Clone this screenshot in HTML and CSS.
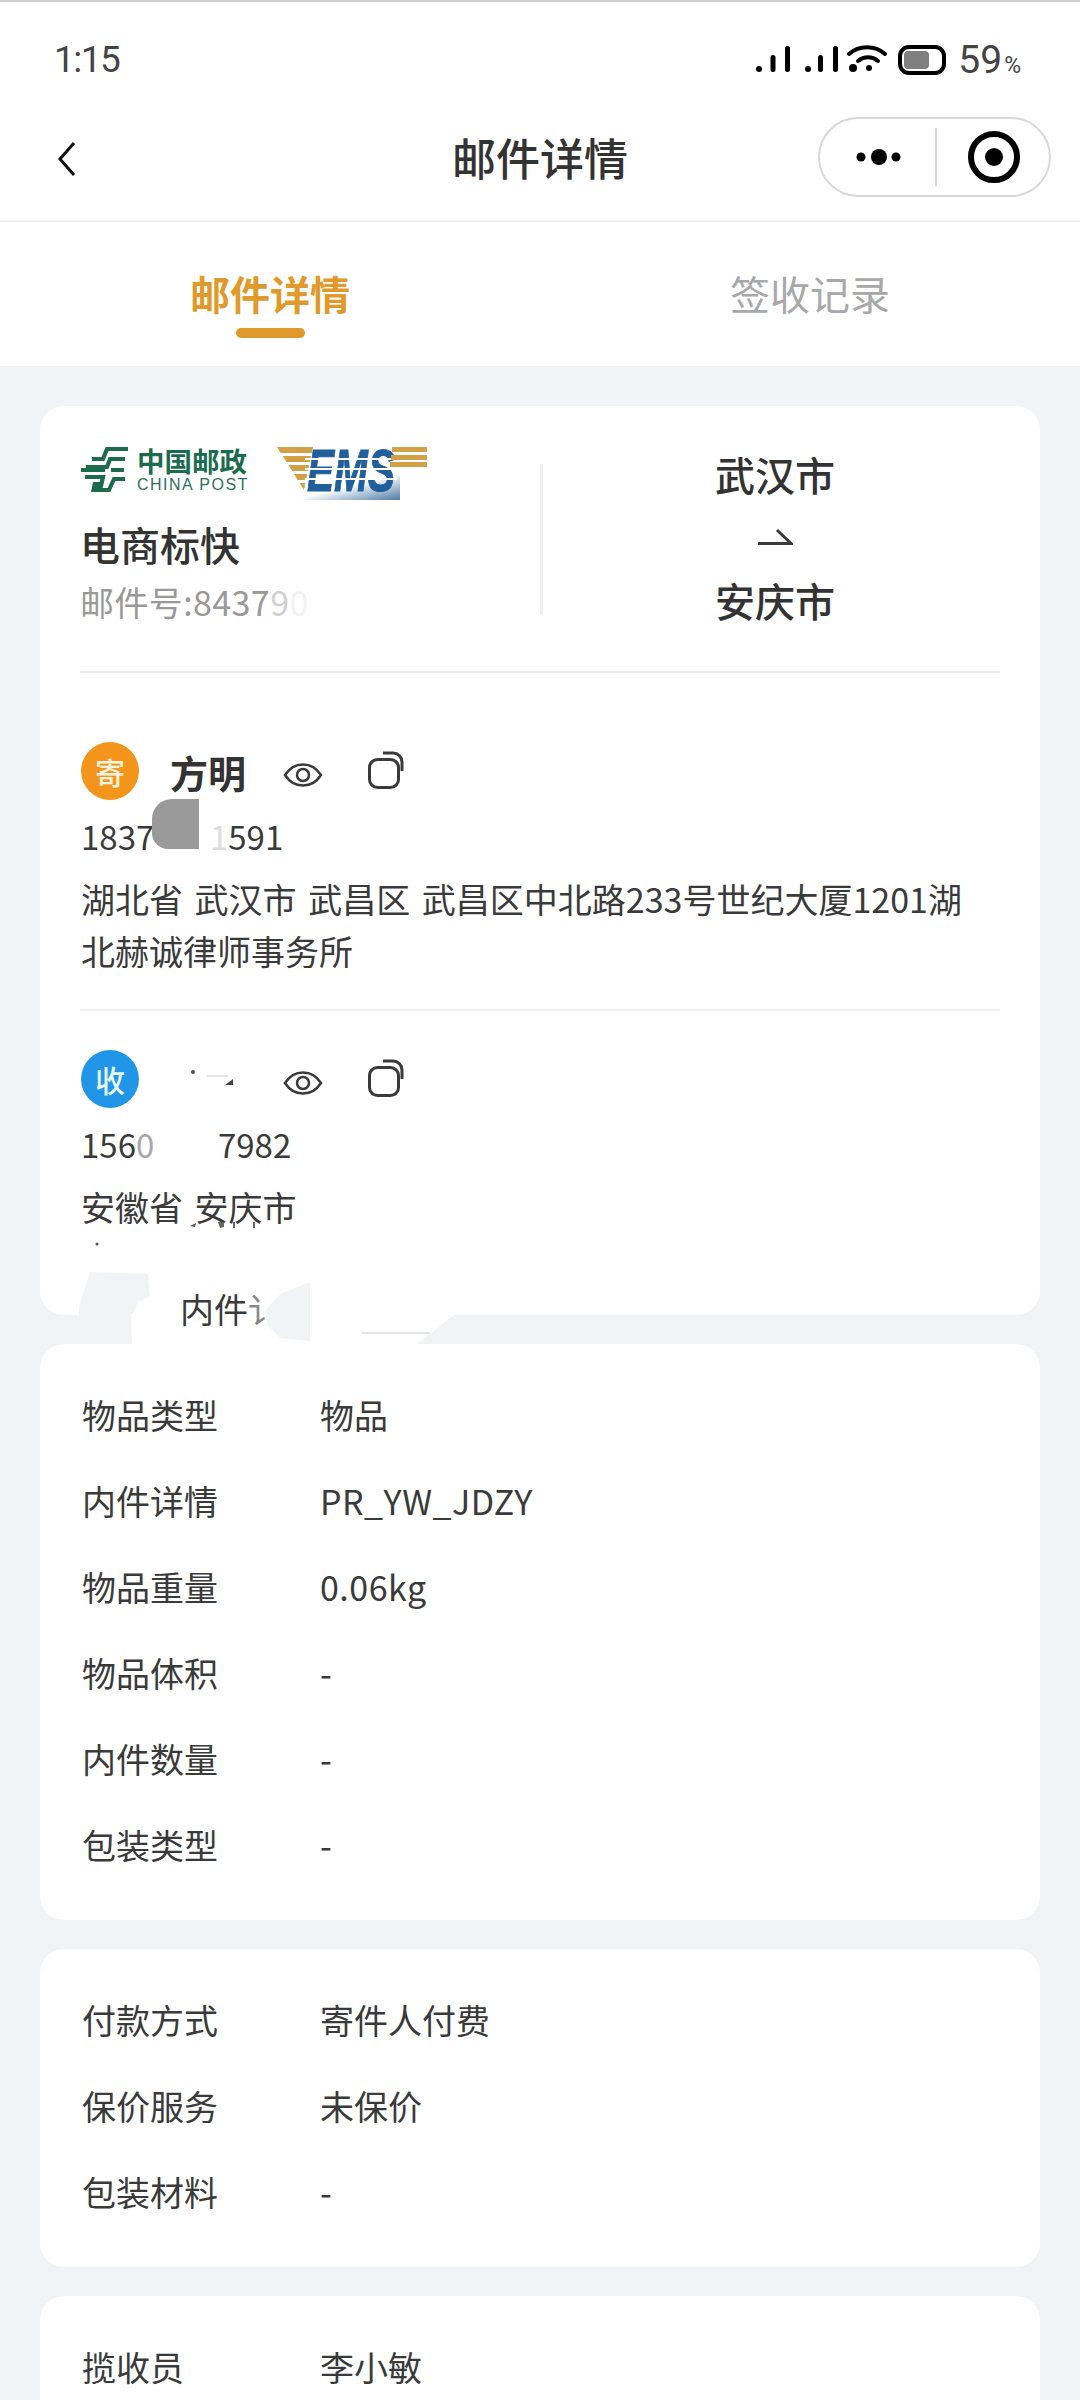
FILE: index.html

```html
<!DOCTYPE html>
<html lang="zh-CN">
<head>
    <meta charset="UTF-8">
    <meta name="viewport" content="width=device-width, initial-scale=1.0">
    <title>邮件详情</title>
    <link rel="stylesheet" href="styles.css">
</head>
<body>
    <div class="page">
        <div class="status-bar">
            <span class="time">1:15</span>
            <div class="status-right">
                <svg class="status-icons" width="135" height="32" viewBox="0 0 135 32">
                    <g fill="#000">
                        <circle cx="6" cy="25" r="3"/>
                        <rect x="17.500" y="11" width="5" height="17" rx="2.500"/>
                        <rect x="32" y="2" width="5" height="26" rx="2.500"/>
                        <circle cx="55" cy="25" r="3"/>
                        <rect x="65" y="11" width="5" height="17" rx="2.500"/>
                        <rect x="80" y="2" width="5" height="26" rx="2.500"/>
                        <circle cx="100" cy="24" r="4"/>
                        <circle cx="116" cy="24" r="3"/>
                    </g>
                    <g fill="none" stroke="#000" stroke-width="4" stroke-linecap="round">
                        <path d="M96 10 C106 1 122 1 132 10"/>
                        <path d="M105 17 C111 12 119 12 125 17"/>
                    </g>
                </svg>
                <div class="battery"><div class="battery-fill"></div></div>
                <span class="percent">59<small>%</small></span>
            </div>
        </div>

        <div class="nav-bar">
            <svg class="back" width="20" height="36" viewBox="0 0 20 36">
                <path d="M17 2 L3 18 L17 34" fill="none" stroke="#111" stroke-width="3"/>
            </svg>
            <div class="nav-title">邮件详情</div>
            <div class="capsule">
                <svg width="60" height="20" viewBox="0 0 60 20">
                    <circle cx="12" cy="10" r="4.500"/>
                    <circle cx="30" cy="10" r="8"/>
                    <circle cx="47" cy="10" r="4.500"/>
                </svg>
                <div class="capsule-line"></div>
                <svg width="60" height="60" viewBox="0 0 60 60">
                    <circle cx="30" cy="30" r="23" fill="none" stroke="#000" stroke-width="6"/>
                    <circle cx="30" cy="30" r="9"/>
                </svg>
            </div>
        </div>

        <div class="tabs">
            <div class="tab active">
                <div class="tab-text">邮件详情</div>
                <div class="tab-line"></div>
            </div>
            <div class="tab">
                <div class="tab-text">签收记录</div>
            </div>
        </div>

        <div class="content">
            <div class="card main-card">
                <div class="mail-head">
                    <div class="mail-left">
                        <div class="logos">
                            <svg class="post-mark" width="48" height="47" viewBox="0 0 48 47">
                                <g fill="none" stroke="#1b6b4e" stroke-width="4.200">
                                    <path d="M47 3 H26 L22 13 H11"/>
                                    <path d="M44 13 H29 L26 21 H5"/>
                                    <path d="M0 24 H24 M30 24 H43"/>
                                    <path d="M4 31 H22 L19 44 H28 L33 33 H44"/>
                                </g>
                                <path d="M12 36 H21 L18 46 H10 Z" fill="#1b6b4e"/>
                            </svg>
                            <div class="post-name">
                                <div class="post-cn">中国邮政</div>
                                <div class="post-en">CHINA POST</div>
                            </div>
                            <svg class="ems-logo" width="152" height="54" viewBox="0 0 152 54">
                                <defs>
                                    <linearGradient id="emsFade" x1="0.100" y1="0.100" x2="0.900" y2="1">
                                        <stop offset="0.450" stop-color="#fff"/>
                                        <stop offset="1" stop-color="#5d86ad"/>
                                    </linearGradient>
                                </defs>
                                <rect x="26" y="26" width="97" height="28" fill="url(#emsFade)"/>
                                <path d="M0 1 H36 L27 44 Z" fill="#d2a045"/>
                                <g fill="#fff">
                                    <rect x="0" y="7" width="40" height="3"/>
                                    <rect x="0" y="16" width="40" height="3"/>
                                    <rect x="0" y="25" width="40" height="3"/>
                                    <rect x="0" y="34" width="40" height="3"/>
                                </g>
                                <text class="ems-text" x="30" y="45" textLength="88" lengthAdjust="spacingAndGlyphs">EMS</text>
                                <g fill="#fff">
                                    <rect x="28" y="12" width="92" height="2"/>
                                    <rect x="28" y="22" width="92" height="2"/>
                                    <rect x="28" y="32" width="92" height="2"/>
                                </g>
                                <g fill="#d2a045">
                                    <rect x="115" y="1" width="35" height="5"/>
                                    <rect x="114" y="9" width="36" height="5"/>
                                    <rect x="113" y="16" width="37" height="5"/>
                                </g>
                            </svg>
                        </div>
                        <div class="mail-type">电商标快</div>
                        <div class="mail-no">邮件号:8437<span class="fade-a">9</span><span class="fade-b">0</span></div>
                    </div>
                    <div class="mail-split"></div>
                    <div class="mail-route">
                        <div class="city">武汉市</div>
                        <svg class="route-arrow" width="36" height="17" viewBox="0 0 36 17">
                            <path d="M1 15.500 H34 L20 2" fill="none" stroke="#3a3a3a" stroke-width="3"/>
                        </svg>
                        <div class="city">安庆市</div>
                    </div>
                </div>

                <div class="person sender">
                    <div class="person-top">
                        <div class="badge orange">寄</div>
                        <div class="person-name">方明</div>
                        <svg class="eye" width="40" height="26" viewBox="0 0 40 26">
                            <path d="M2 13 C11 -1 29 -1 38 13 C29 27 11 27 2 13 Z" fill="none" stroke="#3a3a3a" stroke-width="2.500"/>
                            <circle cx="20" cy="13" r="6" fill="none" stroke="#3a3a3a" stroke-width="2.500"/>
                        </svg>
                        <svg class="copy" width="36" height="38" viewBox="0 0 36 38">
                            <rect x="1.500" y="8.500" width="29" height="28" rx="8" fill="none" stroke="#3a3a3a" stroke-width="3"/>
                            <path d="M15 2 H25 a9 9 0 0 1 9 9 V20" fill="none" stroke="#3a3a3a" stroke-width="3"/>
                        </svg>
                    </div>
                    <div class="phone">1837<span class="phone-gap-a">1</span>591<div class="blot"></div></div>
                    <div class="address">湖北省 武汉市 武昌区 武昌区中北路233号世纪大厦1201湖北赫诚律师事务所</div>
                </div>

                <div class="person receiver">
                    <div class="person-top">
                        <div class="badge blue">收</div>
                        <svg class="person-name" width="76" height="40" viewBox="0 0 76 40">
                            <circle cx="23" cy="13" r="2" fill="#555"/>
                            <path d="M37 17 H58" stroke="#ddd" stroke-width="1.500"/>
                            <path d="M55 26 L63 20 V26 Z" fill="#444"/>
                        </svg>
                        <svg class="eye" width="40" height="26" viewBox="0 0 40 26">
                            <path d="M2 13 C11 -1 29 -1 38 13 C29 27 11 27 2 13 Z" fill="none" stroke="#3a3a3a" stroke-width="2.500"/>
                            <circle cx="20" cy="13" r="6" fill="none" stroke="#3a3a3a" stroke-width="2.500"/>
                        </svg>
                        <svg class="copy" width="36" height="38" viewBox="0 0 36 38">
                            <rect x="1.500" y="8.500" width="29" height="28" rx="8" fill="none" stroke="#3a3a3a" stroke-width="3"/>
                            <path d="M15 2 H25 a9 9 0 0 1 9 9 V20" fill="none" stroke="#3a3a3a" stroke-width="3"/>
                        </svg>
                    </div>
                    <div class="phone">156<span class="phone-gap-b">0</span>7982</div>
                    <div class="address">安徽省 安庆市</div>
                </div>

                <svg class="specks" width="300" height="40" viewBox="0 0 300 40">
                    <circle cx="57" cy="28" r="1.500" fill="#555"/>
                    <path d="M150 10 L156 7 L155 11 Z" fill="#555"/>
                    <path d="M178 6 L184 6 V11 L180 12 Z" fill="#666"/>
                    <path d="M194 6 V12 M214 6 V12" stroke="#666" stroke-width="2"/>
                </svg>

                <div class="torn-edge">
                    <svg width="500" height="80" viewBox="0 0 500 80">
                        <path d="M39 49 V41 L50 6 L108 8 L110 30 L98 36 L92 49 Z" fill="#f2f3f5"/>
                        <path d="M91 48 H415 L390 68 L377 78 H92 Z" fill="#fff"/>
                        <path d="M225 45 L240 28 L270 16 V75 L240 72 L228 60 Z" fill="#f2f3f5"/>
                        <path d="M322 67 H390" stroke="#e6e6e6" stroke-width="2"/>
                    </svg>
                    <span class="torn-text">内件<span class="torn-frag">讠</span></span>
                </div>
            </div>

            <div class="card info-card">
                <div class="row"><span class="row-label">物品类型</span><span>物品</span></div>
                <div class="row"><span class="row-label">内件详情</span><span class="latin">PR_YW_JDZY</span></div>
                <div class="row"><span class="row-label">物品重量</span><span class="latin">0.06kg</span></div>
                <div class="row"><span class="row-label">物品体积</span><span>-</span></div>
                <div class="row"><span class="row-label">内件数量</span><span>-</span></div>
                <div class="row"><span class="row-label">包装类型</span><span>-</span></div>
            </div>

            <div class="card info-card">
                <div class="row"><span class="row-label">付款方式</span><span>寄件人付费</span></div>
                <div class="row"><span class="row-label">保价服务</span><span>未保价</span></div>
                <div class="row"><span class="row-label">包装材料</span><span>-</span></div>
            </div>

            <div class="card info-card">
                <div class="row"><span class="row-label">揽收员</span><span>李小敏</span></div>
            </div>
        </div>
    </div>
</body>
</html>
```

FILE: styles.css

```css
* {
    box-sizing: border-box;
}
html, body {
    margin: 0;
    padding: 0;
    height: 2400px;
    overflow: hidden;
}
body {
    font-family: "Noto Sans CJK SC", "Noto Sans", sans-serif;
    color: #3a3a3a;
    background-color: #f2f3f5;
}
.page {
    height: 2400px;
    overflow: hidden;
    background-color: #f2f3f5;
    border-top: 2px solid #cfcfcf;
}

/* status bar */
.status-bar {
    height: 92px;
    padding: 24px 59px 0 54px;
    display: flex;
    justify-content: space-between;
    align-items: flex-start;
    background: #fff;
}
.time {
    font-family: Roboto, sans-serif;
    font-size: 37px;
    line-height: 68px;
    letter-spacing: -1.500px;
    color: #444;
    height: 68px;
}
.status-right {
    display: flex;
    align-items: center;
    height: 68px;
}
.status-icons {
    margin-right: 10px;
}
.battery {
    width: 48px;
    height: 30px;
    border: 4px solid #000;
    border-radius: 11px;
    padding: 2px;
    margin-right: 12px;
}
.battery-fill {
    width: 25px;
    height: 18px;
    background: #808080;
    border-radius: 4px;
}
.percent {
    font-family: Roboto, sans-serif;
    font-size: 39px;
    color: #444;
}
.percent small {
    font-size: 23px;
    margin-left: 2px;
}

/* nav */
.nav-bar {
    height: 128px;
    position: relative;
    display: flex;
    align-items: center;
    padding: 0 29px 0 57px;
    justify-content: space-between;
    background: #fff;
    border-bottom: 2px solid #f0f0f0;
}
.back {
    margin-top: 4px;
}
.nav-title {
    position: absolute;
    left: 0;
    right: 0;
    text-align: center;
    font-size: 44px;
    font-weight: 500;
    color: #333;
    pointer-events: none;
}
.capsule {
    width: 233px;
    height: 80px;
    border: 2px solid #d8d8d8;
    border-radius: 40px;
    display: flex;
    align-items: center;
    padding-left: 29px;
}
.capsule-line {
    width: 2px;
    height: 58px;
    background: #d8d8d8;
    margin: 0 27px 0 26px;
}

/* tabs */
.tabs {
    height: 144px;
    display: flex;
    background: #fff;
}
.tab {
    width: 540px;
    padding-top: 43px;
    display: flex;
    flex-direction: column;
    align-items: center;
    color: #a8a8a8;
}
.tab-text {
    font-size: 40px;
    line-height: 56px;
}
.tab.active {
    color: #e09a2b;
    font-weight: 700;
}
.tab-line {
    width: 69px;
    height: 10px;
    margin-top: 7px;
    border-radius: 5px;
    background: #e09a2b;
}

/* cards */
.content {
    padding: 40px 40px 0;
    display: flex;
    flex-direction: column;
    gap: 29px;
}
.card {
    background: #fff;
    border-radius: 24px;
}
.main-card {
    position: relative;
    height: 909px;
    padding: 38px 40px 0;
}
.mail-head {
    height: 229px;
    display: grid;
    grid-template-columns: 460px 3px 459px;
    border-bottom: 2px solid #eee;
}
.logos {
    display: flex;
    align-items: flex-start;
    height: 55px;
}
.post-mark {
    margin: 2px 0 0 1px;
}
.post-name {
    margin-left: 8px;
    width: 113px;
}
.post-cn {
    font-size: 27.500px;
    line-height: 32px;
    font-weight: 700;
    color: #1b6b4e;
    white-space: nowrap;
}
.post-en {
    font-family: "Liberation Sans", sans-serif;
    font-size: 16px;
    line-height: 17px;
    letter-spacing: 1.500px;
    color: #2f6f5c;
    white-space: nowrap;
}
.ems-logo {
    margin: 2px 0 0 27px;
    overflow: visible;
}
.ems-text {
    font-family: "Liberation Sans", sans-serif;
    font-size: 60px;
    font-weight: 700;
    font-style: italic;
    fill: #1f5f9c;
    stroke: #1f5f9c;
    stroke-width: 1;
}
.mail-type {
    margin-top: 17px;
    font-size: 40px;
    line-height: 56px;
    font-weight: 500;
    color: #333;
}
.mail-no {
    margin-top: 6px;
    font-size: 34px;
    line-height: 48px;
    letter-spacing: 0.400px;
    color: #999;
}
.fade-a {
    opacity: 0.45;
}
.fade-b {
    opacity: 0.12;
}
.mail-split {
    width: 3px;
    height: 150px;
    margin-top: 20px;
    background: #eee;
}
.mail-route {
    padding-left: 5px;
    display: flex;
    flex-direction: column;
    align-items: center;
}
.city {
    font-size: 40px;
    line-height: 60px;
    font-weight: 500;
    color: #333;
}
.route-arrow {
    margin: 24px 0 25px;
}

/* sender and receiver */
.person {
    position: relative;
}
.sender {
    padding: 69px 0 32px 1px;
    border-bottom: 2px solid #eee;
}
.receiver {
    padding: 39px 0 0 1px;
}
.person-top {
    display: flex;
    align-items: center;
    height: 58px;
}
.badge {
    width: 58px;
    height: 58px;
    border-radius: 50%;
    display: flex;
    align-items: center;
    justify-content: center;
    font-size: 30px;
    font-weight: 500;
    color: #fdf3df;
}
.orange {
    background: #f4951b;
}
.blue {
    background: #2196e8;
    color: #e4f6ff;
}
.person-name {
    width: 76px;
    margin: 0 37px 0 31px;
    font-size: 38px;
    font-weight: 700;
    color: #333;
    white-space: nowrap;
}
.copy {
    margin: -3px 0 0 45px;
}
.eye {
    margin-top: 8px;
}
.phone {
    position: relative;
    margin-top: 11px;
    font-size: 33px;
    line-height: 50px;
}
.phone-gap-a {
    display: inline-block;
    width: 74px;
    text-align: right;
    color: #ddd;
}
.phone-gap-b {
    display: inline-block;
    width: 82px;
    color: #aaa;
}
.blot {
    position: absolute;
    left: 71px;
    top: -12px;
    width: 47px;
    height: 50px;
    background: #9a9a9a;
    border-radius: 20px 0 0 16px;
}
.address {
    margin-top: 12px;
    padding-right: 10px;
    font-size: 34px;
    line-height: 52px;
    word-spacing: 4px;
    color: #3a3a3a;
}

/* patchy bottom edge of the first card */
.specks {
    position: absolute;
    left: 0;
    top: 810px;
}
.torn-edge {
    position: absolute;
    left: 0;
    top: 860px;
    width: 500px;
    height: 80px;
}
.torn-edge svg {
    display: block;
}
.torn-text {
    position: absolute;
    left: 140px;
    top: 19px;
    font-size: 34px;
    line-height: 48px;
}
.torn-frag {
    opacity: 0.6;
}

/* info rows */
.info-card {
    padding: 30px 40px 30px 42px;
}
.row {
    display: flex;
    align-items: center;
    height: 86px;
    padding-bottom: 6px;
    font-size: 34px;
}
.row-label {
    width: 238px;
}
.latin {
    letter-spacing: 0.500px;
}
```
